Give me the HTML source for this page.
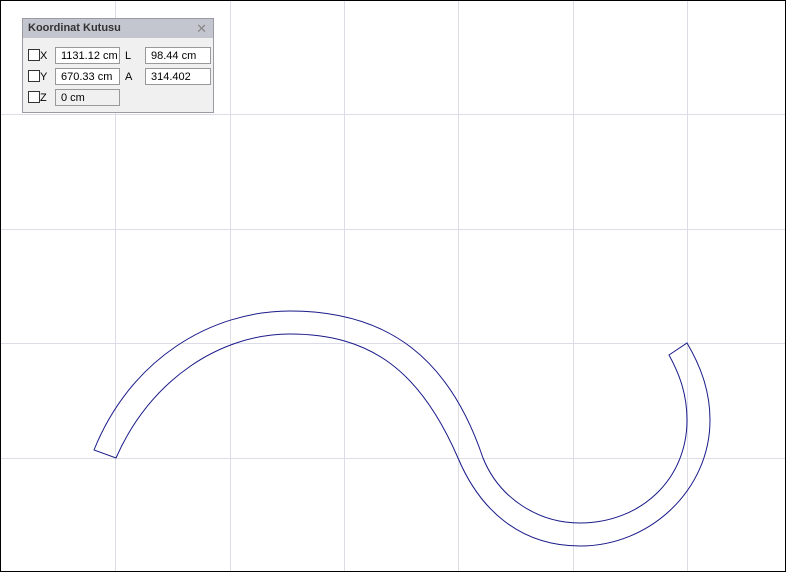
<!DOCTYPE html>
<html><head><style>
body{margin:0;width:786px;height:572px;overflow:hidden;background:#fff;font-family:"Liberation Sans",sans-serif;}
#frame{position:absolute;left:0;top:0;width:784px;height:570px;border:1px solid #000;}
#panel{position:absolute;left:22px;top:18px;width:190px;height:93px;background:#f0f0f0;border:1px solid #9a9aa2;font-size:11px;}
#title{height:19px;background:#c4c6cf;font-weight:bold;color:#333;line-height:19px;padding-left:5px;font-size:11px;}
#x{position:absolute;right:6px;top:0;color:#888;font-weight:normal;font-size:13px;}
.cb{position:absolute;width:10px;height:10px;border:1px solid #333;background:#fff;}
.lb{position:absolute;color:#000;}
.in{position:absolute;height:17px;border:1px solid #999;background:#fff;line-height:17px;padding-left:5px;box-sizing:border-box;}
</style></head><body>
<svg width="786" height="572" style="position:absolute;left:0;top:0">
<g stroke="#dcdce8" stroke-width="1">
<line x1="115.5" y1="0" x2="115.5" y2="572"/><line x1="230.5" y1="0" x2="230.5" y2="572"/><line x1="344.5" y1="0" x2="344.5" y2="572"/><line x1="458.5" y1="0" x2="458.5" y2="572"/><line x1="573.5" y1="0" x2="573.5" y2="572"/><line x1="687.5" y1="0" x2="687.5" y2="572"/>
<line x1="0" y1="114.5" x2="786" y2="114.5"/><line x1="0" y1="229.5" x2="786" y2="229.5"/><line x1="0" y1="343.5" x2="786" y2="343.5"/><line x1="0" y1="458.5" x2="786" y2="458.5"/>
</g>
<g fill="none" stroke="#1a1a8a" stroke-width="1">
<path d="M94,450 C130,360 210,311 290,311 C390,311 450,360 483,458 C500,500 540,523 580,523 C640,523 687,480 687,420 C687,395 680,375 669,355 L687,343 C700,365 710,390 710,420 C710,490 650,546 580,546 C520,546 480,510 458,458 C420,370 370,334 290,334 C220,334 150,380 116,458 Z"/>
</g>
</svg>
<div id="frame"></div>
<div id="panel">
<div id="title">Koordinat Kutusu<span id="x">✕</span></div>
<div class="cb" style="left:5px;top:30px"></div><div class="lb" style="left:17px;top:31px">X</div>
<div class="in" style="left:32px;top:28px;width:65px">1131.12 cm</div>
<div class="lb" style="left:102px;top:31px">L</div>
<div class="in" style="left:122px;top:28px;width:66px">98.44 cm</div>
<div class="cb" style="left:5px;top:51px"></div><div class="lb" style="left:17px;top:52px">Y</div>
<div class="in" style="left:32px;top:49px;width:65px">670.33 cm</div>
<div class="lb" style="left:102px;top:52px">A</div>
<div class="in" style="left:122px;top:49px;width:66px">314.402</div>
<div class="cb" style="left:5px;top:72px"></div><div class="lb" style="left:17px;top:73px">Z</div>
<div class="in" style="left:32px;top:70px;width:65px;background:#f0f0f0">0 cm</div>
</div>
</body></html>
